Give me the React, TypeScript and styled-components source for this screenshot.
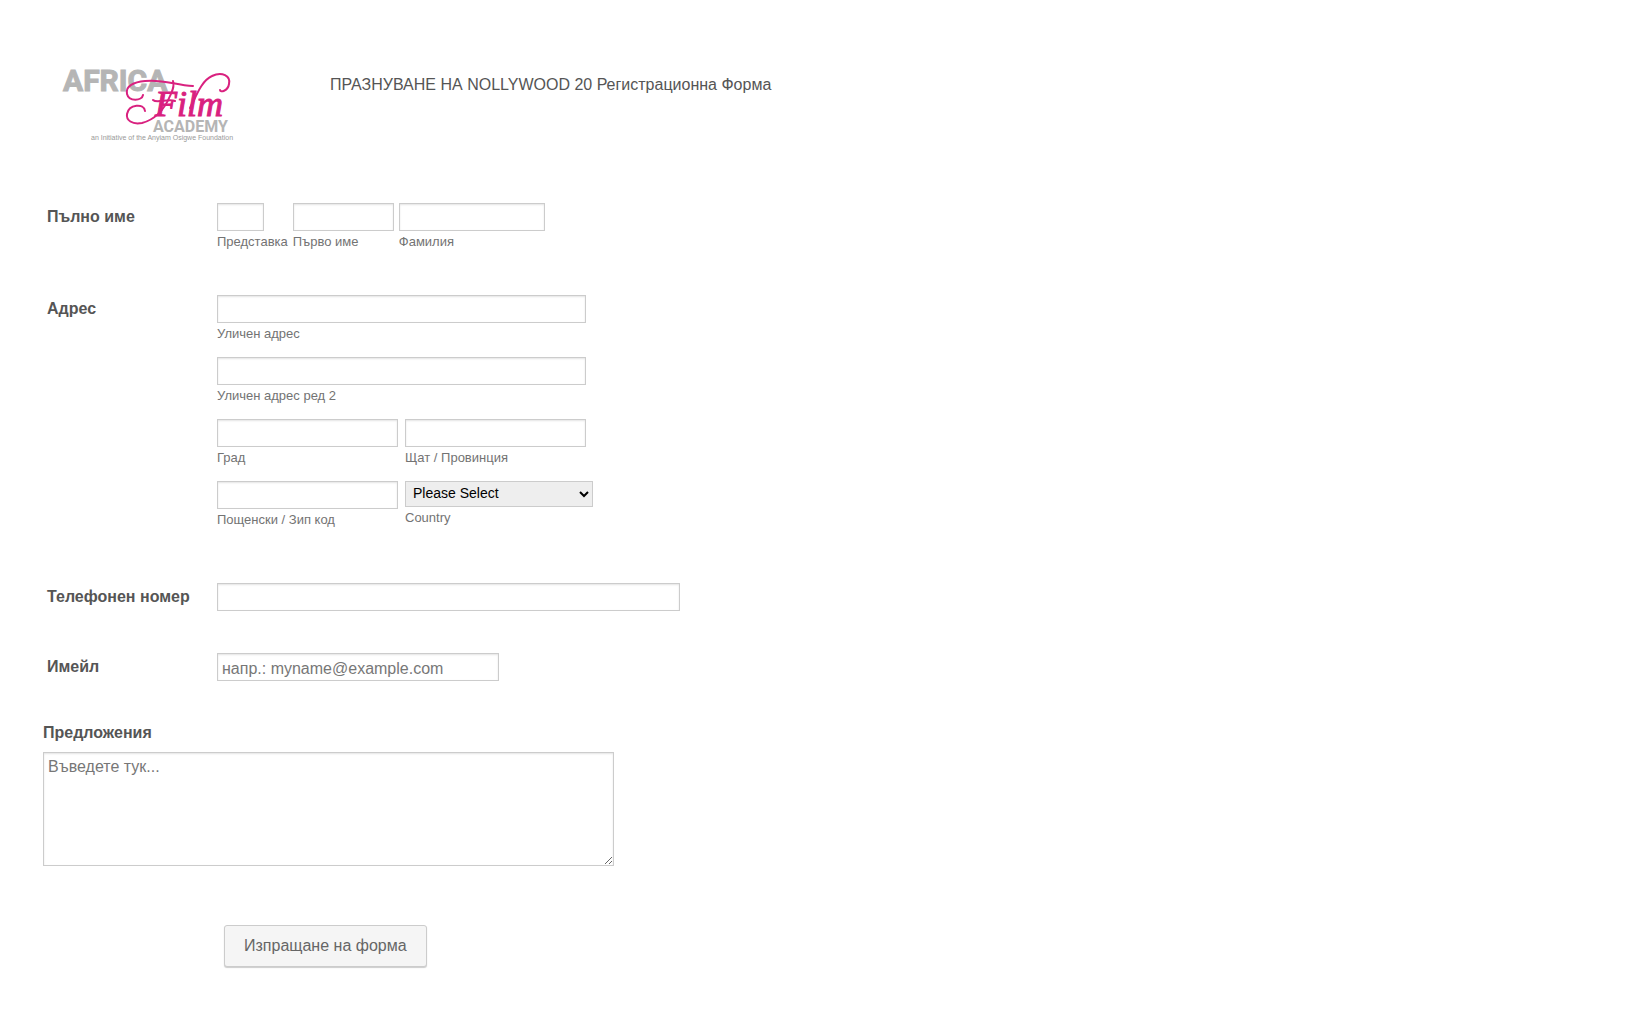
import React from "react";
import styled, { createGlobalStyle, css } from "styled-components";

const GlobalStyle = createGlobalStyle`
  *, *::before, *::after { box-sizing: border-box; }
  body {
    margin: 0;
    background: #fff;
    color: #555;
    font-family: "Liberation Sans", Arial, sans-serif;
    font-size: 16px;
    line-height: 20px;
  }
`;

const Form = styled.form`
  padding: 50px 43px 40px;
`;

const Header = styled.header`
  display: flex;
  align-items: flex-start;
  gap: 80px;
  height: 140px;
`;

const Logo = styled.svg`
  flex: none;
  width: 207px;
  height: 110px;
`;

const Title = styled.h1`
  margin: 0;
  padding-top: 25px;
  font-size: 16px;
  font-weight: 400;
`;

const Row = styled.div<{ $space: number }>`
  display: grid;
  grid-template-columns: 170px minmax(0, 1fr);
  padding: 13px 0 0 4px;
  margin-bottom: ${(p) => p.$space}px;
`;

const labelText = css`
  font-size: 16px;
  font-weight: 700;
  line-height: 20px;
`;

const RowLabel = styled.label`
  ${labelText}
  padding-top: 4px;
`;

const GroupLabel = styled.span`
  ${labelText}
  padding-top: 4px;
`;

const Fields = styled.div<{ $gap: number }>`
  display: flex;
  align-items: flex-start;
  gap: ${(p) => p.$gap}px;
`;

const Stack = styled.div`
  display: flex;
  flex-direction: column;
  gap: 15px;
`;

const Field = styled.div`
  display: flex;
  flex-direction: column;
  align-items: flex-start;
`;

const SubLabel = styled.label`
  padding-top: 2px;
  color: #737373;
  font-size: 13px;
  line-height: 17px;
`;

const box = css`
  border: 1px solid #ccc;
  background: #fff;
  box-shadow: inset 0 1px 2px #e4e4e4;
  color: #555;
  font-family: inherit;
  font-size: 16px;

  &::placeholder {
    color: #777;
    opacity: 1;
  }
`;

const Input = styled.input<{ $width: number }>`
  ${box}
  display: block;
  width: ${(p) => p.$width}px;
  max-width: 100%;
  height: 28px;
  padding: 3px 4px 0;
`;

const Select = styled.select`
  width: 188px;
  height: 26px;
  padding: 0 3px 2px;
  border: 1px solid #ccc;
  border-radius: 0;
  background: #eee;
  color: #000;
  font-family: inherit;
  font-size: 14px;
`;

const MessageBlock = styled.div`
  display: flex;
  flex-direction: column;
  align-items: flex-start;
  gap: 9px;
`;

const MessageLabel = styled.label`
  ${labelText}
`;

const TextArea = styled.textarea`
  ${box}
  width: 571px;
  max-width: 100%;
  height: 114px;
  padding: 4px;
  line-height: 20px;
  resize: both;
`;

const Actions = styled.div`
  padding: 59px 0 0 181px;
`;

const Submit = styled.button`
  height: 42px;
  padding: 0 19px;
  border: 1px solid #ccc;
  border-radius: 3px;
  background: #f5f5f5;
  box-shadow: 0 1px 1px #ccc;
  color: #666;
  font-family: inherit;
  font-size: 16px;
`;

function AcademyLogo() {
  return (
    <Logo viewBox="43 50 207 110" role="img" aria-label="Africa Film Academy">
      <g fill="#b5b5b5" stroke="#b5b5b5" fontFamily="Roboto, sans-serif" fontWeight="700">
        <text x="63" y="91" fontSize="30" strokeWidth="1">AFRICA</text>
        <text x="153" y="132" fontSize="16" strokeWidth="0">ACADEMY</text>
      </g>
      <text x="91" y="140" fill="#999" fontFamily="Liberation Sans, sans-serif" fontSize="7">
        an Initiative of the Anyiam Osigwe Foundation
      </text>
      <g fill="none" stroke="#d9217f" strokeWidth="2" strokeLinecap="round">
        <path d="M143 95C142 101 129 102 127 94C125 86 134 82 145 81C163 79 175 85 193 86" />
        <path d="M173 81C175 87 172 91 170 96C165 108 157 119 142 123C132 125 126 120 127 114C129 104 144 103 145 111" />
        <path d="M153 100C157 104 168 98 175 101" />
        <path d="M190 108C196 97 201 81 212 76C222 71 231 76 229 84C228 91 220 93 220 90" />
      </g>
      <text
        x="155"
        y="116"
        fill="#d9217f"
        stroke="#d9217f"
        strokeWidth="1"
        fontFamily="Liberation Serif, serif"
        fontStyle="italic"
        fontSize="36"
      >
        Film
      </text>
    </Logo>
  );
}

type TextFieldProps = { id: string; label: string; width: number };

function TextField({ id, label, width }: TextFieldProps) {
  return (
    <Field>
      <Input id={id} name={id} type="text" $width={width} />
      <SubLabel htmlFor={id}>{label}</SubLabel>
    </Field>
  );
}

export default function App() {
  return (
    <>
      <GlobalStyle />
      <Form onSubmit={(e: React.FormEvent) => e.preventDefault()}>
        <Header>
          <AcademyLogo />
          <Title>ПРАЗНУВАНЕ НА NOLLYWOOD 20 Регистрационна Форма</Title>
        </Header>

        <Row $space={32} role="group" aria-labelledby="name-label">
          <GroupLabel id="name-label">Пълно име</GroupLabel>
          <Fields $gap={5}>
            <TextField id="prefix" label="Представка" width={47} />
            <TextField id="first" label="Първо име" width={101} />
            <TextField id="last" label="Фамилия" width={146} />
          </Fields>
        </Row>

        <Row $space={42} role="group" aria-labelledby="address-label">
          <GroupLabel id="address-label">Адрес</GroupLabel>
          <Stack>
            <TextField id="street" label="Уличен адрес" width={369} />
            <TextField id="street2" label="Уличен адрес ред 2" width={369} />
            <Fields $gap={7}>
              <TextField id="city" label="Град" width={181} />
              <TextField id="state" label="Щат / Провинция" width={181} />
            </Fields>
            <Fields $gap={7}>
              <TextField id="postal" label="Пощенски / Зип код" width={181} />
              <Field>
                <Select id="country" name="country" defaultValue="">
                  <option value="">Please Select</option>
                </Select>
                <SubLabel htmlFor="country">Country</SubLabel>
              </Field>
            </Fields>
          </Stack>
        </Row>

        <Row $space={29}>
          <RowLabel htmlFor="phone">Телефонен номер</RowLabel>
          <Input id="phone" name="phone" type="tel" $width={463} />
        </Row>

        <Row $space={42}>
          <RowLabel htmlFor="email">Имейл</RowLabel>
          <Input id="email" name="email" type="email" placeholder="напр.: myname@example.com" $width={282} />
        </Row>

        <MessageBlock>
          <MessageLabel htmlFor="message">Предложения</MessageLabel>
          <TextArea id="message" name="message" placeholder="Въведете тук..." />
        </MessageBlock>

        <Actions>
          <Submit type="submit">Изпращане на форма</Submit>
        </Actions>
      </Form>
    </>
  );
}
